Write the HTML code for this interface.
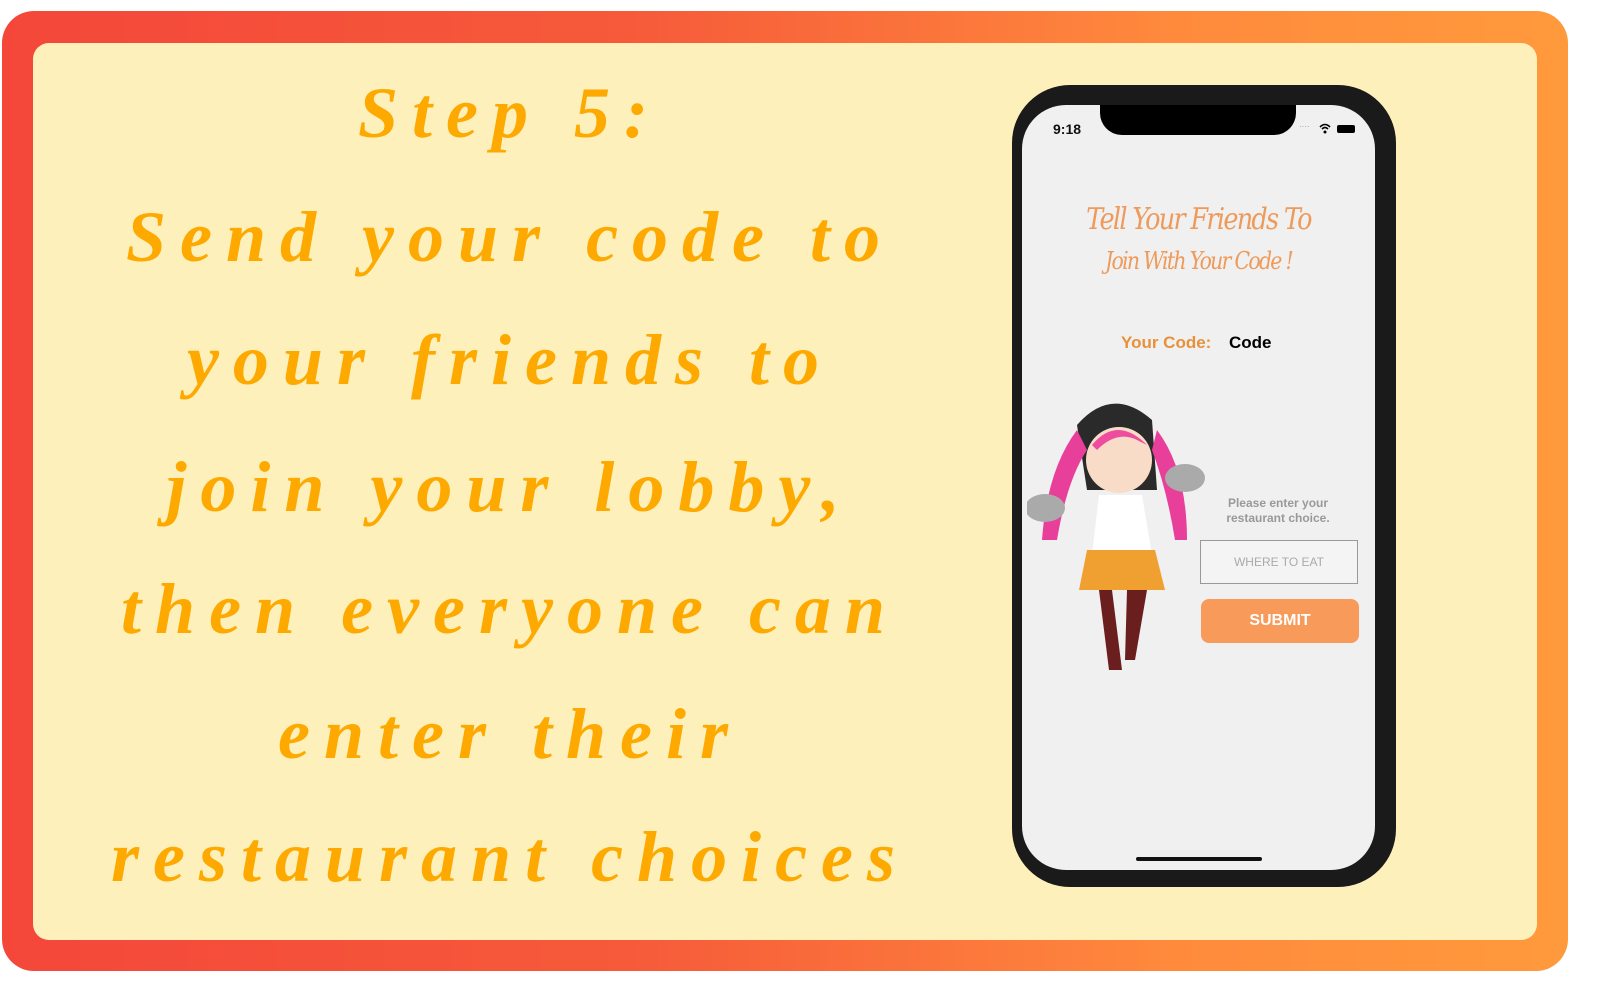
<!DOCTYPE html>
<html><head><style>
body{margin:0;width:1600px;height:1000px;background:#fff;position:relative;overflow:hidden;font-family:"Liberation Sans",sans-serif}
.outer{position:absolute;left:2px;top:11px;width:1566px;height:960px;border-radius:32px;background:linear-gradient(90deg,#f4473a 0%,#f65a3a 40%,#ff8a3c 75%,#ff9a3c 100%)}
.inner{position:absolute;left:33px;top:43px;width:1504px;height:897px;border-radius:16px;background:#fdf0bb}
.txt{position:absolute;left:60px;width:900px;text-align:center;font-family:"Liberation Serif",serif;font-style:italic;font-weight:bold;color:#fda900;font-size:72px;letter-spacing:14px;white-space:nowrap}
.phone{position:absolute;left:1012px;top:85px;width:384px;height:802px;border-radius:58px;background:#1a1a1a}
.screen{position:absolute;left:1022px;top:105px;width:353px;height:765px;border-radius:44px;background:#f0f0f0;overflow:hidden}
.notch{position:absolute;left:78px;top:0;width:196px;height:30px;background:#000;border-radius:0 0 22px 22px}
</style></head><body>
<div class="outer"></div><div class="inner"></div>
<div class="txt" style="top:72px">Step 5:</div>
<div class="txt" style="top:196px">Send your code to</div>
<div class="txt" style="top:319px">your friends to</div>
<div class="txt" style="top:446px">join your lobby,</div>
<div class="txt" style="top:568px">then everyone can</div>
<div class="txt" style="top:693px">enter their</div>
<div class="txt" style="top:816px">restaurant choices</div>
<div class="phone"></div>
<div class="screen">
<div class="notch"></div>
<div style="position:absolute;left:31px;top:16px;font-size:14px;font-weight:bold;color:#111">9:18</div>
<div style="position:absolute;left:277px;top:17px;font-size:8px;color:#999">····</div>
<svg style="position:absolute;left:296px;top:17px" width="40" height="14"><path d="M2 5 Q7 0 12 5 M4 7 Q7 4 10 7" stroke="#000" stroke-width="1.6" fill="none"/><circle cx="7" cy="10" r="1.5"/><rect x="19" y="3" width="18" height="8" rx="2"/></svg>
<div style="position:absolute;left:0;width:353px;top:95px;text-align:center;color:#ee9a5a;font-family:'DejaVu Serif',serif;font-style:italic;font-size:30px;line-height:40px;letter-spacing:-2px;transform:scaleX(0.85)">Tell Your Friends To<br><span style="font-size:24px">Join With Your Code !</span></div>
<div style="position:absolute;left:99px;top:228px;font-size:17px;font-weight:bold;color:#e8913a">Your Code:</div>
<div style="position:absolute;left:207px;top:228px;font-size:17px;font-weight:bold;color:#000">Code</div>
<svg style="position:absolute;left:5px;top:285px" width="190" height="295">
<path d="M50 35 Q85 -5 125 30 L130 100 L60 100 Z" fill="#2a2a2a"/>
<path d="M50 40 Q20 80 15 150 L30 150 Q40 90 60 60Z M130 40 Q160 80 160 150 L148 150 Q140 100 125 60Z" fill="#e8409a"/>
<circle cx="92" cy="70" r="33" fill="#f8dcc8"/>
<path d="M65 55 Q90 25 120 55 L110 50 Q90 40 70 60Z" fill="#ee4c9e"/>
<path d="M72 105 L115 105 L125 165 L65 165Z" fill="#fff"/>
<path d="M60 160 L128 160 L138 200 L52 200Z" fill="#f0a030"/>
<path d="M72 200 L85 200 L95 280 L82 280Z M100 200 L120 200 L108 270 L98 270Z" fill="#6a1e1e"/>
<ellipse cx="18" cy="118" rx="20" ry="14" fill="#aaa"/><ellipse cx="158" cy="88" rx="20" ry="14" fill="#aaa"/>
</svg>
<div style="position:absolute;left:190px;top:391px;width:132px;text-align:center;font-size:12px;font-weight:bold;color:#999;line-height:15px">Please enter your restaurant choice.</div>
<div style="position:absolute;left:178px;top:435px;width:156px;height:42px;border:1px solid #999;background:#f4f4f4;font-size:12px;color:#aaa;text-align:center;line-height:42px">WHERE TO EAT</div>
<div style="position:absolute;left:179px;top:494px;width:158px;height:44px;border-radius:8px;background:#f79a5a;color:#fff;font-weight:bold;font-size:16px;text-align:center;line-height:44px">SUBMIT</div>
<div style="position:absolute;left:114px;top:752px;width:126px;height:4px;border-radius:2px;background:#111"></div>
</div>
</body></html>
